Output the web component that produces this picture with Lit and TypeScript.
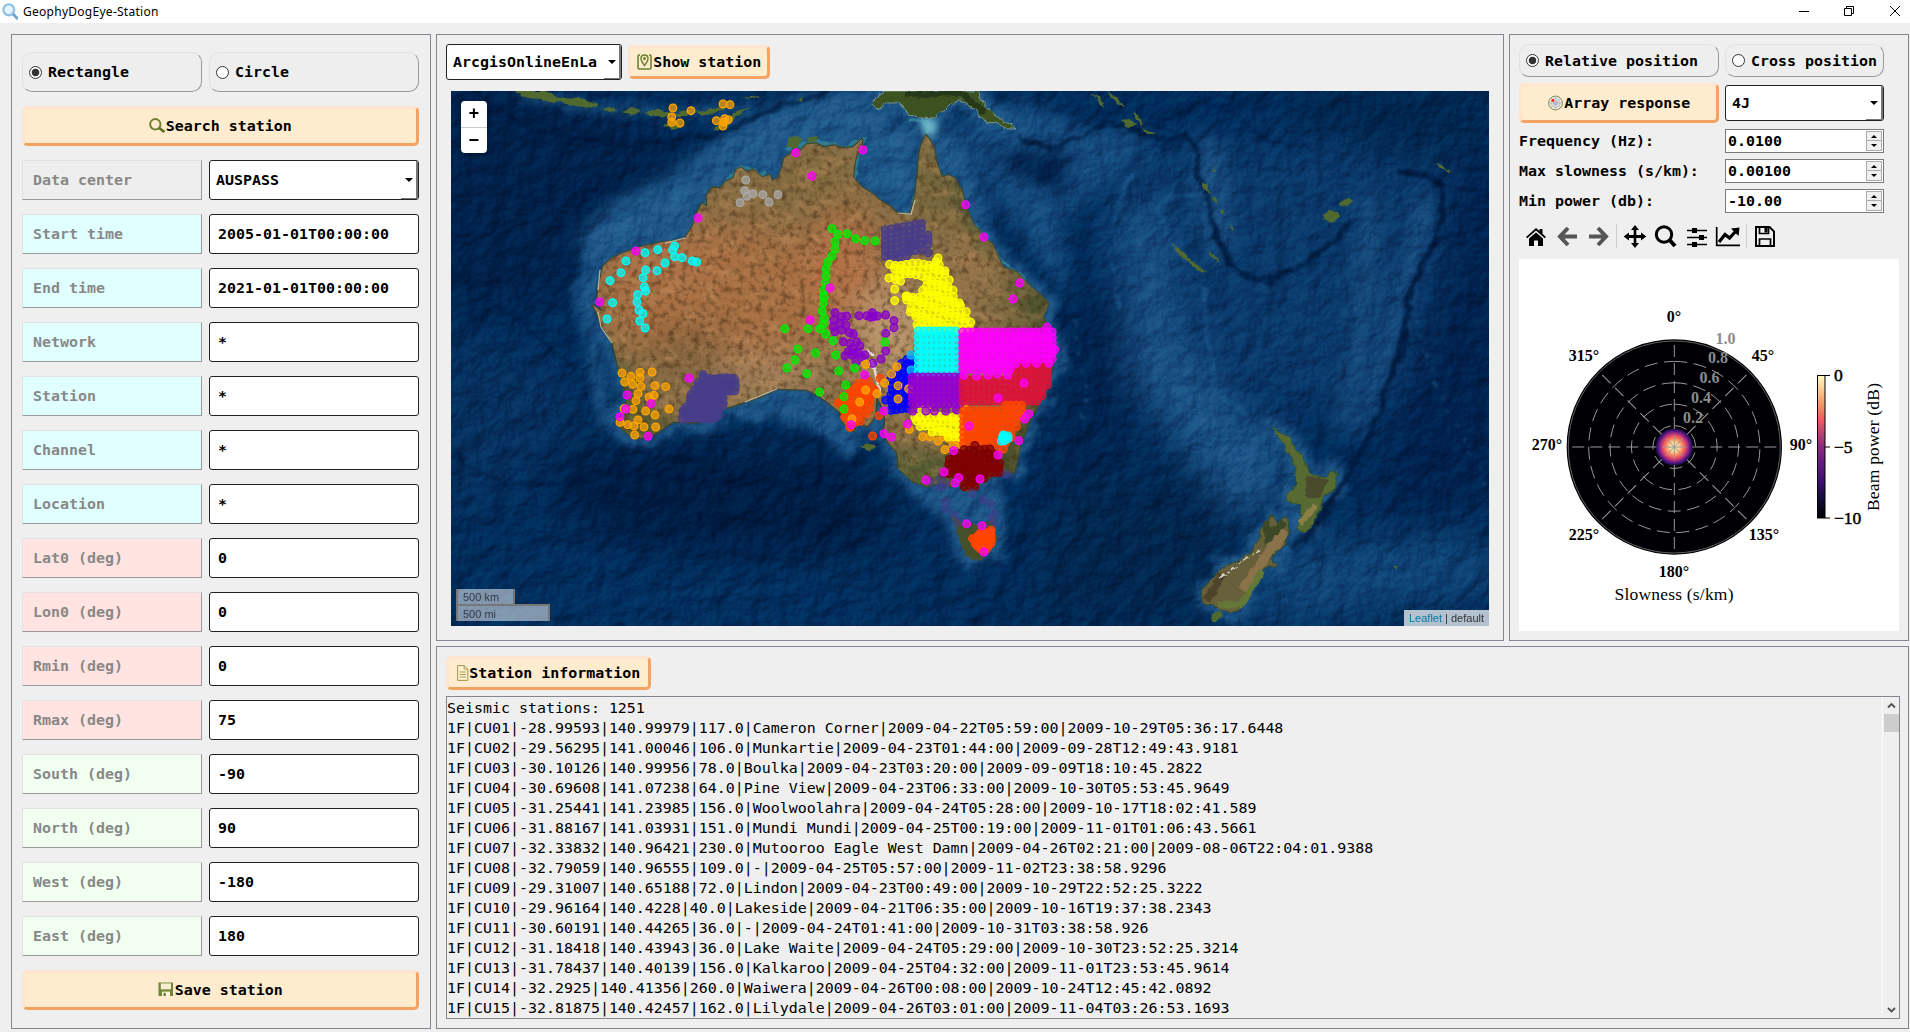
import { LitElement, html, css, svg } from "lit";
import { customElement } from "lit/decorators.js";

/* ---------- station markers ---------- */
type P = [number, number];
const parse = (s: string): P[] => s.trim().split(/\s+/).map((p) => p.split(",").map(Number) as P);

const inside = (x: number, y: number, poly: P[]) => {
  let hit = false;
  for (let i = 0, j = poly.length - 1; i < poly.length; j = i++) {
    const [xi, yi] = poly[i];
    const [xj, yj] = poly[j];
    if (yi > y !== yj > y && x < ((xj - xi) * (y - yi)) / (yj - yi) + xi) hit = !hit;
  }
  return hit;
};

/* regular array of stations limited to an outline; "jitter" loosens the grid */
const fill = (outline: string, dx: number, dy: number, jitter = 0): P[] => {
  const poly = parse(outline);
  const xs = poly.map((p) => p[0]);
  const ys = poly.map((p) => p[1]);
  const out: P[] = [];
  let n = 0;
  for (let y = Math.min(...ys) + 1; y <= Math.max(...ys); y += dy)
    for (let x = Math.min(...xs) + 1; x <= Math.max(...xs); x += dx) {
      n++;
      if (inside(x, y, poly)) out.push([x + Math.sin(n * 12.9) * jitter, y + Math.cos(n * 7.3) * jitter]);
    }
  return out;
};

/* slanted lattice spanned by two step vectors */
const lattice = (x0: number, y0: number, ax: number, ay: number, na: number, bx: number, by: number, nb: number): P[] => {
  const out: P[] = [];
  for (let i = 0; i < na; i++) for (let j = 0; j < nb; j++) out.push([x0 + i * ax + j * bx, y0 + i * ay + j * by]);
  return out;
};

interface Net { color: string; pts: P[]; soft?: boolean }
const NETS: Net[] = [
  { color: "#ffa500", pts: parse("339,-336 393,-328 335,-309 335,-293 360,-291 489,-348 510,-346 469,-298 494,-304 505,-301 489,-282 492,-294") },
  { color: "#a9a9a9", pts: parse("557,-120 554,-88 579,-79 560,-71 609,-76 654,-76 627,-54 540,-52") },
  { color: "#00ffff", pts: parse("198,123 183,158 150,182 255,98 293,89 338,90 344,78 344,110 366,113 397,123 410,126 315,129 291,152 257,150 249,173 253,201 257,213 233,224 231,246 237,270 249,281 239,303 255,324 158,248 141,297") },
  { color: "#ffa500", pts: parse("186,459 213,469 240,457 276,456 194,486 218,493 240,474 243,500 285,497 317,500 234,521 267,531 282,526 228,542 192,566 219,568 257,573 285,585 327,567 234,600 180,607 203,614 222,618 252,621 287,621 224,645") },
  { color: "#483d8b", pts: fill("418,462 535,468 532,512 500,520 490,560 470,604 355,604 362,570 385,550 385,518 412,505", 12, 12, 2) },
  { color: "#483d8b", pts: [...lattice(976, 30, 18, -3.3, 7, 0, 15.6, 6), ...parse("1104,46 1104,72 1104,58 1104,98 1046,70 1054,64 1062,76 1050,84 993,118 1018,112 1040,107")] },
  { color: "#ffff00", pts: [...fill("990,128 1135,116 1245,328 1068,328 1034,228 1085,208 1092,190 1085,172 1000,186", 16, 16, 4), ...parse("987,174 1004,207 1004,242 1040,240 1038,228 1128,125")] },
  { color: "#8800cc", pts: parse("825,278 822,300 845,290 860,288 820,320 840,310 858,315 825,335 845,330 868,338 880,342 897,287 920,287 937,278 940,290 932,292 952,288 977,285 1002,302 1002,323 977,340 977,393 963,417 938,430 850,365 870,370 890,365 878,385 900,378 855,407 875,405 895,400 915,405 888,425 865,395 905,410 882,398") },
  { color: "#00ee00", pts: parse("816,26 834,43 861,41 887,56 914,62 945,63 825,65 825,87 816,108 804,126 798,147 798,168 796,190 790,212 792,230 790,248 786,272 793,295 790,312 780,326 744,326 674,326 797,342 819,362 714,387 767,399 828,405 705,420 681,444 740,461 836,453 884,444 975,366 779,516") },
  { color: "#ff4500", pts: [...fill("838,548 880,490 925,472 940,480 944,540 905,605 872,630 848,590", 15, 15, 4), ...parse("957,587 938,648 960,475 944,510 870,622 834,549")] },
  { color: "#00ee00", pts: parse("857,495 852,530 852,567") },
  { color: "#0000ff", pts: fill("1036,402 1064,420 1064,470 1050,480 1052,574 982,570 978,545 982,465 1018,452", 16, 15, 3) },
  { color: "#ffa500", pts: parse("917,433 1011,440 995,462 974,489 1014,497 1046,506 951,521 917,510 1014,537 899,546 876,597") },
  { color: "#00bfff", pts: parse("1053,405 1053,450") },
  { color: "#ffa500", pts: parse("1048,628 1088,650 1110,650 1134,663 1155,689 1150,650 1165,655 1180,675 1205,675 1200,640 1212,558 1190,660") },
  { color: "#ffff00", pts: fill("1050,602 1080,572 1210,578 1210,662 1180,662 1125,645 1070,622", 16, 16, 3) },
  { color: "#00ffff", pts: fill("1074,332 1200,332 1200,460 1074,460", 15.8, 17.5) },
  { color: "#9400d3", pts: [...fill("1056,470 1200,470 1200,560 1056,560", 15.8, 16), ...parse("1058,573 1098,573 1123,573 1157,573 1190,570")] },
  { color: "#dc143c", pts: fill("1370,430 1476,430 1462,505 1435,555 1208,555 1208,470 1348,470", 15.8, 16) },
  { color: "#ff4500", pts: [...fill("1210,558 1398,555 1372,625 1350,675 1210,675", 15.8, 16), ...parse("1281,689 1310,689 1330,687")] },
  { color: "#ff00ff", pts: [...fill("1207,335 1478,335 1480,430 1370,432 1352,456 1207,458", 15.8, 16), ...parse("1484,388 1461,322 1467,430 1430,430 1398,430 1343,465 1312,462 1285,465 1250,468 1212,466")] },
  { color: "#800000", pts: fill("1158,715 1208,688 1240,674 1290,684 1330,735 1330,766 1255,776 1258,805 1215,806 1200,775 1152,765", 15, 14, 2) },
  { color: "#483d8b", soft: true, pts: parse("1142,775 1138,802 1155,790 1148,798 1156,845 1157,865 1182,885 1195,907 1237,820 1269,840 1293,852 1303,882 1300,906 1296,893 1340,762 1110,785") },
  { color: "#00ffff", pts: parse("1324,663 1328,655 1330,645 1336,655 1344,648 1344,656 1334,662 1328,650") },
  { color: "#ff4500", pts: fill("1236,955 1262,936 1295,930 1298,965 1280,990 1262,992 1246,978", 8, 8, 1) },
  { color: "#ff00ff", pts: parse("708,-202 909,-210 756,-132 414,-6 1217,-46 228,93 119,246 810,204 750,300 1272,51 1380,189 1359,237 387,474 201,525 273,551 197,567 180,590 264,649 914,465 972,573 873,614 972,641 995,651 1043,612 1181,692 1152,756 1098,780 1196,773 1185,789 1260,777 1314,705 1376,662 1406,582 1394,597 1392,489 1314,534 1227,618 1220,911 1266,917 1272,996") },
];

/* ---------- coast outlines ---------- */
const AUS =
  "M598,287L602,270L603,266L612,258L623,253L640,247L662,242L674,241L685,238L692,227L698,210L702,203L707,206L706,196L712,187L720,188L726,181L733,178L736,170L741,167L747,172L753,169L762,177L770,175L772,181L778,178L782,167L784,158L791,153L794,147L801,150L806,144L816,143L824,147L834,145L844,148L853,147L862,138L863,149L857,155L855,163L853,177L862,187L872,193L880,200L890,206L898,213L910,214L914,200L917,177L919,153L922,142L926,134L934,147L937,163L942,177L949,175L955,178L962,190L966,207L973,223L987,240L992,243L1003,267L1017,272L1031,287L1042,296L1049,303L1043,317L1050,330L1055,350L1052,370L1043,397L1030,420L1020,447L1015,473L1006,472L997,475L985,480L977,487L968,492L961,484L957,483L950,487L943,482L927,487L920,484L913,482L898,468L897,453L888,443L883,433L885,420L882,408L877,397L876,412L873,420L867,427L862,424L868,407L873,396L875,388L866,403L858,423L853,432L843,423L840,413L833,407L820,397L807,390L777,389L760,397L737,405L720,410L713,420L693,423L673,422L657,433L647,438L633,438L620,428L618,420L625,410L627,397L622,380L617,363L612,343L602,327L596,312L592,304L601,311L600,303L597,298Z";
const TAS = "M953,516L963,522L978,524L993,519L997,537L994,547L991,546L988,556L980,560L970,561L965,553L962,547L957,532Z";
const NEWGUINEA = "M873,106L875,97L884,91L976,91L981,98L985,107L995,115L1003,120L1017,129L1008,129L996,123L986,122L976,110L966,103L959,100L950,104L944,110L934,118L920,117L909,115L904,107L898,103L888,103L880,108Z";
const NZN = "M1272,427L1280,433L1290,437L1295,451L1302,454L1304,459L1307,463L1308,471L1312,474L1325,478L1330,472L1339,472L1336,482L1335,490L1323,495L1322,505L1318,513L1312,524L1305,532L1296,528L1302,515L1300,505L1291,502L1285,497L1286,493L1295,488L1296,472L1293,460L1287,450L1282,443Z";
const NZS = "M1268,517L1273,515L1277,523L1283,518L1287,517L1290,528L1290,533L1283,546L1275,553L1272,561L1278,563L1276,567L1268,567L1256,575L1250,590L1247,600L1238,611L1230,612L1218,609L1214,605L1202,603L1203,590L1212,578L1223,568L1240,560L1253,550L1258,540L1260,530Z";
const ISLES =
  "M515,91L545,91L560,97L580,98L598,104L597,108L583,107L560,103L540,99L528,98Z M602,109L610,107L618,110L610,113Z M622,111L632,107L640,111L632,115Z M643,111L656,109L672,113L690,110L686,116L668,116L650,116Z M696,111L712,109L728,106L722,110L704,115Z M662,125L674,122L682,126L672,129Z M714,128L724,120L738,111L750,107L741,114L730,122L719,131Z M740,98L760,96L755,99Z M799,100L804,95L801,103Z M1092,93L1100,97L1106,106L1100,104Z M1107,91L1118,98L1124,108L1112,98Z M1120,120L1131,119L1136,125L1128,128Z M1132,110L1139,117L1143,128L1137,121Z M1143,127L1152,132L1155,136L1147,133Z M1173,244L1180,249L1190,260L1206,271L1199,270L1186,261L1176,251Z M1202,182L1207,184L1210,193L1204,189Z M1212,196L1218,200L1217,204L1213,201Z M1214,167L1216,173L1213,173Z M1223,209L1227,214L1223,213Z M1229,225L1234,229L1230,230Z M1207,250L1215,255L1221,263L1212,257Z M1323,215L1328,211L1337,212L1340,217L1333,222L1325,220Z M1338,203L1346,198L1355,200L1348,205L1340,206Z M1437,164L1443,165L1445,170L1440,168Z M1446,168L1453,173L1447,171Z M1213,613L1219,611L1222,616L1217,621L1212,621Z M787,138L797,136L802,141L797,147L787,146Z M806,137L815,135L818,140L809,142Z M861,448L868,443L877,446L870,451Z M1393,566L1397,565L1397,570Z";

/* ---------- glyphs ---------- */
const icon = {
  logo: svg`<circle cx="6.8" cy="6.8" r="5.4" fill="#e9f4fc" stroke="#91c1e5" stroke-width="2.4"/><path d="M11,11L16,16" stroke="#6ea6d2" stroke-width="3"/>`,
  search: svg`<circle cx="6.3" cy="6.3" r="5.2" fill="none" stroke="#718335" stroke-width="2"/><path d="M10,10L15.4,14" stroke="#5c7025" stroke-width="2.6"/>`,
  save: svg`<path d="M0.5,0.5H15V14H0.5Z" fill="#6f8636"/><path d="M2.8,1.4H13V7.4H2.8Z" fill="#f9edd2"/><path d="M4,9.6H12V14H4Z" fill="#fff3d8"/><path d="M5.6,10.8H7.7V14H5.6Z" fill="#5b7326"/>`,
  pin: svg`<path d="M3,1H2.2Q1,1 1,2.2V13.8Q1,15 2.2,15H12.8Q14,15 14,13.8V2.2Q14,1 12.8,1H12" fill="none" stroke="#66802f" stroke-width="1.5"/><path d="M7.5,1Q11,1 11,4.5Q11,7 7.5,11.5Q4,7 4,4.5Q4,1 7.5,1Z" fill="#fbe8c4" stroke="#66802f" stroke-width="1.4"/><circle cx="7.5" cy="4.6" r="1.5" fill="#66802f"/>`,
  doc: svg`<path d="M.6,.6H7.2L10.8,4.2V15.4H.6Z" fill="#fff0cf" stroke="#9c9a50"/><path d="M7.2,.6V4.2H10.8M2.5,7H9M2.5,9.5H9M2.5,12H9" fill="none" stroke="#a3a05a"/>`,
  radar: svg`<circle cx="7.5" cy="8" r="6.9" fill="#f4ecd6" stroke="#779054" stroke-width="1"/><circle cx="7.5" cy="8" r="4.4" fill="none" stroke="#a9aecb" stroke-width=".8"/><circle cx="7.5" cy="8" r="2" fill="none" stroke="#9097c0" stroke-width=".8"/><path d="M7.5,1V15M.6,8H14.4M2.8,3.4L12.2,12.6M12.2,3.4L2.8,12.6" stroke="#a4a9c8" stroke-width=".6"/><circle cx="4.8" cy="5.4" r="1.4" fill="#ed1c1c"/>`,
};
const glyph = (g: unknown, w = 16, h = 16) => html`<svg class="ico" width=${w} height=${h} viewBox="0 0 ${w} ${h}">${g}</svg>`;

const FIELDS: [string, string, string][] = [
  ["Start time", "2005-01-01T00:00:00", "cyan"],
  ["End time", "2021-01-01T00:00:00", "cyan"],
  ["Network", "*", "cyan"],
  ["Station", "*", "cyan"],
  ["Channel", "*", "cyan"],
  ["Location", "*", "cyan"],
  ["Lat0 (deg)", "0", "rose"],
  ["Lon0 (deg)", "0", "rose"],
  ["Rmin (deg)", "0", "rose"],
  ["Rmax (deg)", "75", "rose"],
  ["South (deg)", "-90", "mint"],
  ["North (deg)", "90", "mint"],
  ["West (deg)", "-180", "mint"],
  ["East (deg)", "180", "mint"],
];

const LOG = `Seismic stations: 1251
1F|CU01|-28.99593|140.99979|117.0|Cameron Corner|2009-04-22T05:59:00|2009-10-29T05:36:17.6448
1F|CU02|-29.56295|141.00046|106.0|Munkartie|2009-04-23T01:44:00|2009-09-28T12:49:43.9181
1F|CU03|-30.10126|140.99956|78.0|Boulka|2009-04-23T03:20:00|2009-09-09T18:10:45.2822
1F|CU04|-30.69608|141.07238|64.0|Pine View|2009-04-23T06:33:00|2009-10-30T05:53:45.9649
1F|CU05|-31.25441|141.23985|156.0|Woolwoolahra|2009-04-24T05:28:00|2009-10-17T18:02:41.589
1F|CU06|-31.88167|141.03931|151.0|Mundi Mundi|2009-04-25T00:19:00|2009-11-01T01:06:43.5661
1F|CU07|-32.33832|140.96421|230.0|Mutooroo Eagle West Damn|2009-04-26T02:21:00|2009-08-06T22:04:01.9388
1F|CU08|-32.79059|140.96555|109.0|-|2009-04-25T05:57:00|2009-11-02T23:38:58.9296
1F|CU09|-29.31007|140.65188|72.0|Lindon|2009-04-23T00:49:00|2009-10-29T22:52:25.3222
1F|CU10|-29.96164|140.4228|40.0|Lakeside|2009-04-21T06:35:00|2009-10-16T19:37:38.2343
1F|CU11|-30.60191|140.44265|36.0|-|2009-04-24T01:41:00|2009-10-31T03:38:58.926
1F|CU12|-31.18418|140.43943|36.0|Lake Waite|2009-04-24T05:29:00|2009-10-30T23:52:25.3214
1F|CU13|-31.78437|140.40139|156.0|Kalkaroo|2009-04-25T04:32:00|2009-11-01T23:53:45.9614
1F|CU14|-32.2925|140.41356|260.0|Waiwera|2009-04-26T00:08:00|2009-10-24T12:45:42.0892
1F|CU15|-32.81875|140.42457|162.0|Lilydale|2009-04-26T03:01:00|2009-11-04T03:26:53.1693`;

@customElement("station-map")
class StationMap extends LitElement {
  static styles = css`
    :host { display: block; position: relative; overflow: hidden; background: #022b5a; font-family: "Liberation Sans", Arial, sans-serif; font-weight: normal; }
    filter { color-interpolation-filters: sRGB; }
    .base { display: block; width: 1038px; height: 535px; }
    .relief { mix-blend-mode: soft-light; }
    .zoom { position: absolute; left: 10px; top: 10px; width: 26px; height: 52px; background: #fff; border-radius: 4px; font: bold 18px/26px "Liberation Mono", monospace; text-align: center; color: #000; box-shadow: 0 1px 5px rgba(0, 0, 0, 0.5); }
    .zoom div { height: 26px; box-sizing: border-box; }
    .zoom div + div { border-top: 1px solid #ccc; }
    .scale { position: absolute; left: 5px; bottom: 5px; font-size: 11px; color: #333b44; }
    .scale div { box-sizing: border-box; border: 2px solid #777; border-bottom: 0; background: rgba(255, 255, 255, 0.5); padding-left: 5px; line-height: 16px; }
    .scale .km { width: 59px; height: 15px; border-top: 0; }
    .scale .mi { width: 94px; height: 17px; }
    .attr { position: absolute; right: 0; bottom: 0; height: 16px; padding: 0 5px; font-size: 11px; line-height: 16px; background: rgba(255, 255, 255, 0.7); color: #333; }
    .attr span { color: #0078a8; }
  `;
  render() {
    return html`
      <svg class="base" viewBox="451 91 1038 535">
        <defs>
          <filter id="b3" x="-30%" y="-30%" width="160%" height="160%"><feGaussianBlur stdDeviation="3.5"/></filter>
          <filter id="b1" x="-30%" y="-30%" width="160%" height="160%"><feGaussianBlur stdDeviation="1.3"/></filter>
          <filter id="b9" x="-50%" y="-50%" width="200%" height="200%"><feGaussianBlur stdDeviation="9"/></filter>
          <filter id="b18" x="-50%" y="-50%" width="200%" height="200%"><feGaussianBlur stdDeviation="18"/></filter>
          <filter id="shelf" x="-10%" y="-10%" width="120%" height="120%"><feGaussianBlur stdDeviation="4" result="g"/><feTurbulence type="fractalNoise" baseFrequency="0.04" numOctaves="4" seed="6" result="t"/><feDisplacementMap in="g" in2="t" scale="18"/></filter>
          <filter id="rough" x="-5%" y="-5%" width="110%" height="110%"><feTurbulence type="fractalNoise" baseFrequency="0.12" numOctaves="3" seed="4" result="t"/><feDisplacementMap in="SourceGraphic" in2="t" scale="6" xChannelSelector="R" yChannelSelector="G"/></filter>
          <filter id="warp" x="-10%" y="-10%" width="120%" height="120%"><feTurbulence type="fractalNoise" baseFrequency="0.05" numOctaves="3" seed="9" result="t"/><feDisplacementMap in="SourceGraphic" in2="t" scale="12" xChannelSelector="R" yChannelSelector="G"/><feGaussianBlur stdDeviation="1.6"/></filter>
          <filter id="relief" x="0" y="0" width="100%" height="100%">
            <feTurbulence type="fractalNoise" baseFrequency="0.05" numOctaves="6" seed="11"/>
            <feColorMatrix values="0 0 0 0 0  0 0 0 0 0  0 0 0 0 0  1 0 0 0 0"/>
            <feDiffuseLighting surfaceScale="5" lighting-color="#a4a4a4"><feDistantLight azimuth="225" elevation="50"/></feDiffuseLighting>
          </filter>
          <filter id="grain" x="0" y="0" width="100%" height="100%">
            <feTurbulence type="fractalNoise" baseFrequency="0.16" numOctaves="4" seed="3"/>
            <feColorMatrix values="0 0 0 0 .22  0 0 0 0 .15  0 0 0 0 .06  2.4 0 0 0 -1.1"/>
          </filter>
          <filter id="sand" x="0" y="0" width="100%" height="100%">
            <feTurbulence type="fractalNoise" baseFrequency="0.05 0.09" numOctaves="5" seed="21"/>
            <feColorMatrix values="0 0 0 0 .8  0 0 0 0 .6  0 0 0 0 .4  0 2.4 0 0 -1.1"/>
          </filter>
          <clipPath id="land"><path d=${AUS}/></clipPath>
        </defs>
        <rect x="451" y="91" width="1038" height="535" fill="#022c5b"/>
        <g filter="url(#b18)">
          <path d="M440,80H560L700,160L600,230L560,300L470,320H440Z" fill="#01214b"/>
          <path d="M440,330L560,360L580,420L500,500L440,520Z" fill="#06305f"/>
          <path d="M560,455L680,440L840,455L900,510L860,560L640,550L560,510Z" fill="#001d45"/>
          <path d="M1060,290L1120,300L1140,420L1100,470L1060,520L1040,470L1070,400Z" fill="#01234f"/>
          <path d="M1110,140H1480V330L1380,420L1200,380L1100,250Z" fill="#0a396b"/>
          <path d="M1450,160H1500V500L1380,520L1400,400L1440,280Z" fill="#01224f"/>
          <path d="M1290,91H1489V150L1400,160L1290,120Z" fill="#01264f"/>
          <path d="M1060,480L1180,470L1240,500L1190,620H1040Z" fill="#02264f"/>
          <path d="M1120,200L1165,220L1175,330L1230,400L1290,440L1280,500L1240,520L1200,470L1130,380Z" fill="#1b5488"/>
          <path d="M1290,540L1480,538L1500,590L1300,620H1220L1270,580Z" fill="#104679"/>
          <path d="M440,560H900V640H440Z" fill="#022f5f"/>
        </g>
        <g filter="url(#b9)">
          <path d="M1020,100L1090,130L1150,130L1120,170L1060,220L1070,300L1040,260L980,170L960,120Z" fill="#154c80"/>
          <path d="M976,152L1070,150L1065,200L1000,165Z" fill="#01224d"/>
          <path d="M577,240L610,205L680,170L740,120L800,95L870,85L900,125L960,130L990,220L960,260L700,270L600,290Z" fill="#1f5a8c"/>
          <path d="M1195,130L1225,150L1235,240L1215,270L1195,200Z" fill="#184d7f"/>
          <path d="M1358,190L1380,200L1378,300L1350,420L1330,440L1350,340Z" fill="#164a7c"/>
          <path d="M1420,190L1436,200L1420,270L1400,330L1370,420L1350,450L1380,340L1400,280Z" fill="#1a5083"/>
        </g>
        <g fill="none" stroke="#1c5587" stroke-linejoin="round" filter="url(#shelf)">
          <path d=${AUS} stroke-width="17"/>
          <path d=${TAS} stroke-width="17" fill="#1c5587"/>
          <path d="M910,485L1000,480L1000,525L950,520Z" fill="#1c5587" stroke-width="10"/>
          <path d="M715,412Q800,385 860,450" stroke-width="28"/>
          <path d="M600,255L580,300L600,380L605,430" stroke-width="16" opacity=".7"/>
          <path d=${NZN + NZS} stroke-width="14"/>
          <path d=${NEWGUINEA} stroke-width="16"/>
          <path d="M520,95L600,108L700,112L750,105" stroke-width="12" opacity=".6"/>
        </g>
        <g fill="none" filter="url(#warp)">
          <path d="M470,80C500,125 540,135 600,142C680,146 740,130 760,112C790,98 810,108 830,86" stroke="#001a40" stroke-width="6" opacity=".7"/>
          <path d="M1017,137L1050,148L1075,140L1105,122L1130,127L1155,139L1190,135L1197,155L1199,177L1210,207L1216,237L1228,260L1245,278L1270,280L1303,267L1335,240L1352,220" stroke="#001c42" stroke-width="5" opacity=".85"/>
          <path d="M1150,127L1175,115L1200,103L1230,110L1260,135L1290,145" stroke="#011e48" stroke-width="3.5" opacity=".7"/>
          <path d="M1399,170L1431,177L1444,187L1442,220L1423,260L1408,303L1403,340L1379,413L1360,453L1340,487L1310,533L1290,548" stroke="#00173d" stroke-width="6" opacity=".85"/>
          <path d="M1160,150L1128,180L1113,220L1112,260L1120,310" stroke="#1d588c" stroke-width="3.5" opacity=".6"/>
          <path d="M1205,195Q1160,190 1160,215Q1170,240 1185,262M1205,285L1208,340L1215,390L1250,420" stroke="#1c568a" stroke-width="5" opacity=".55"/>
          <path d="M451,270Q490,300 520,320Q550,350 575,370" stroke="#001c43" stroke-width="2.5" opacity=".8"/>
          <path d="M451,450Q500,500 570,480Q650,470 750,485" stroke="#00183e" stroke-width="3" opacity=".6"/>
          <path d="M1056,480Q1020,510 1015,560Q1000,600 970,626" stroke="#001b44" stroke-width="6" opacity=".5"/>
          <path d="M1075,320L1085,390L1080,440M1415,320L1435,380L1460,430L1489,490" stroke="#2a5b86" stroke-width="2" stroke-dasharray="4 12" opacity=".7"/>
        </g>
        <rect class="relief" x="451" y="91" width="1038" height="535" filter="url(#relief)" opacity=".6"/>
        <g fill="none" stroke="#3d9a9c" filter="url(#rough)" opacity=".6">
          <path d="M694,223L707,200L722,187L741,167L765,176M787,150L816,142L845,148L862,140L855,165L855,180" stroke-width="5"/>
          <path d="M898,214L912,215L917,190M910,120L926,122L927,135" stroke-width="4"/>
          <path d="M973,223L1003,262L1026,280" stroke-width="3"/>
        </g>
        <path d="M920,118h14l4,12l-10,8l-6,-8Z" fill="#6fb6cb" filter="url(#b3)"/>
        <g stroke="#2a3d28" stroke-width="1">
          <path d=${AUS} fill="#7c6742" filter="url(#b1)"/>
          <path d=${AUS} fill="#8a7048"/>
        </g>
        <g clip-path="url(#land)">
          <g filter="url(#b18)">
            <ellipse cx="720" cy="295" rx="125" ry="72" fill="#a87044"/>
            <ellipse cx="660" cy="265" rx="60" ry="28" fill="#ad7348"/>
            <ellipse cx="845" cy="265" rx="35" ry="60" fill="#b37046"/>
            <ellipse cx="890" cy="330" rx="38" ry="50" fill="#bb9870"/>
            <ellipse cx="800" cy="185" rx="80" ry="32" fill="#866d42"/>
            <ellipse cx="760" cy="372" rx="70" ry="18" fill="#a88560"/>
            <ellipse cx="690" cy="352" rx="36" ry="20" fill="#7a5c39"/>
            <ellipse cx="932" cy="180" rx="18" ry="60" fill="#70663c"/>
            <ellipse cx="1020" cy="300" rx="42" ry="42" fill="#73663f"/>
            <ellipse cx="975" cy="265" rx="25" ry="50" fill="#99774c"/>
          </g>
          <g filter="url(#b9)">
            <path d="M1010,270L1060,300L1065,380L1010,490L970,500L980,470L1025,410L1040,340Z" fill="#464f2a"/>
            <path d="M610,360L630,370L650,410L680,425L640,450L600,430Z" fill="#535931"/>
            <path d="M885,450L960,455L1000,490L900,495Z" fill="#525c33"/>
            <path d="M945,165L970,190L1000,250L985,250L955,210Z" fill="#4e5631"/>
          </g>
          <rect x="590" y="130" width="470" height="370" filter="url(#sand)" opacity=".42"/>
          <rect x="590" y="130" width="470" height="370" filter="url(#grain)" opacity=".55"/>
          <path d="M872,360L876,376L880,395M868,350L873,356" stroke="#e6ddd0" stroke-width="2.5" fill="none" filter="url(#rough)"/>
        </g>
        <path d="M598,312L601,327L612,343M600,270L598,290M685,238L665,243M898,213L911,214L915,200M777,389L745,402M720,408L716,418" stroke="#d8cfb4" stroke-width="1.2" fill="none" opacity=".8"/>
        <g filter="url(#rough)">
          <path d=${NEWGUINEA} fill="#3c5220" stroke="#8fa89a" stroke-width=".8"/>
          <path d="M905,95L960,93L985,112" stroke="#26381a" stroke-width="6" fill="none"/>
          <path d=${ISLES} fill="#50692f"/>
          <path d=${TAS} fill="#454f2b"/>
          <path d=${NZN} fill="#566a31" stroke="#2d5138"/>
          <path d="M1308,476L1330,480L1318,498L1304,496Z" fill="#4a4a2c"/>
          <path d="M1300,524L1316,505" stroke="#8b8048" stroke-width="6"/>
          <path d=${NZS} fill="#665f39" stroke="#2f4a2e"/>
          <path d="M1285,530L1262,562L1242,590" stroke="#8a734a" stroke-width="10" fill="none"/>
          <path d="M1266,520L1268,538L1284,522" stroke="#3c4826" stroke-width="8" fill="none"/>
          <path d="M1207,600L1222,574" stroke="#4c4529" stroke-width="8"/>
          <path d="M1218,605H1240L1248,595L1262,571" stroke="#637737" stroke-width="7" fill="none"/>
          <path d="M1220,578L1236,566L1246,559L1260,550" stroke="#d9d4c8" stroke-width="1.3" stroke-dasharray="6 3 3 3" fill="none"/>
        </g>
        <g transform="translate(560 220) scale(.33333)">
          ${NETS.map((n) => svg`<g fill=${n.color} stroke=${n.color} stroke-width="3.6" fill-opacity=".72" opacity=${n.soft ? 0.7 : 1}>${n.pts.map(([x, y]) => svg`<circle cx=${x.toFixed(1)} cy=${y.toFixed(1)} r="11.6"/>`)}</g>`)}
        </g>
      </svg>
      <div class="zoom"><div>+</div><div>−</div></div>
      <div class="scale"><div class="km">500 km</div><div class="mi">500 mi</div></div>
      <div class="attr"><span>Leaflet</span> | default</div>`;
  }
}

@customElement("beam-plot")
class BeamPlot extends LitElement {
  static styles = css`
    :host { display: block; background: #fff; font-family: "Liberation Serif", "Times New Roman", serif; font-weight: normal; }
    svg { display: block; }
    .ang { font-weight: bold; font-size: 16px; text-anchor: middle; }
    .rad { font-weight: bold; font-size: 16px; text-anchor: middle; fill: #8c8c8c; }
    .ttl { font-size: 17.5px; text-anchor: middle; }
    .cb { font-size: 17.5px; stroke: #000; stroke-width: 0.5px; }
  `;
  render() {
    const cx = 155.3, cy = 188, R = 107;
    const angles: [string, number, number][] = [
      ["0°", 155, 63], ["45°", 244, 102], ["90°", 282, 191], ["135°", 245, 281],
      ["180°", 155, 317.5], ["225°", 65, 281], ["270°", 28, 191], ["315°", 65, 102],
    ];
    const radii: [string, number, number][] = [["1.0", 206.5, 85], ["0.8", 199, 104], ["0.6", 190.5, 124], ["0.4", 182, 144], ["0.2", 174, 164]];
    const heat: [number, string][] = [
      [18.6, "#1d1147"], [17.6, "#3b0f70"], [16.4, "#641a80"], [15, "#8c2981"], [13.8, "#b5367a"], [12.4, "#de4968"],
      [11, "#f1605d"], [9.6, "#fa7f5e"], [8.2, "#fe9f6d"], [6.6, "#fec287"], [5, "#fddc9e"], [3, "#fcf0b2"],
    ];
    return html`<svg width="380" height="372" viewBox="0 0 380 372">
      <defs><linearGradient id="magma" x1="0" y1="1" x2="0" y2="0">
        <stop offset="0" stop-color="#000004"/><stop offset=".13" stop-color="#140e36"/><stop offset=".25" stop-color="#3b0f70"/><stop offset=".38" stop-color="#641a80"/>
        <stop offset=".5" stop-color="#8c2981"/><stop offset=".6" stop-color="#c73e73"/><stop offset=".7" stop-color="#f1605d"/><stop offset=".82" stop-color="#fe9f6d"/><stop offset="1" stop-color="#fcfdbf"/>
      </linearGradient></defs>
      <circle cx=${cx} cy=${cy} r=${R} fill="#000004" stroke="#000" stroke-width="1.3"/>
      ${heat.map(([r, c]) => svg`<circle cx=${cx} cy=${cy} r=${r} fill=${c}/>`)}
      <g fill="none" stroke="#999" stroke-width="1">
        ${[0, 45, 90, 135, 180, 225, 270, 315].map((a) => svg`<path d="M${cx},${cy}V${cy - R}" transform="rotate(${a} ${cx} ${cy})" stroke-dasharray="12 6"/>`)}
        ${[1, 2, 3, 4].map((k) => svg`<circle cx=${cx} cy=${cy} r=${k * 21.4} transform="rotate(-90 ${cx} ${cy})" stroke-dasharray="13 6.5"/>`)}
        <circle cx=${cx} cy=${cy} r=${R - 1} stroke="#777" stroke-width=".8"/>
      </g>
      ${radii.map(([t, x, y]) => svg`<text class="rad" x=${x} y=${y}>${t}</text>`)}
      ${angles.map(([t, x, y]) => svg`<text class="ang" x=${x} y=${y}>${t}</text>`)}
      <text class="ttl" x="155" y="341" textLength="119">Slowness (s/km)</text>
      <rect x="298.5" y="116.5" width="7.5" height="142.5" fill="url(#magma)" stroke="#000"/>
      <path d="M306,116.5h5M306,188h5M306,259h5" stroke="#000"/>
      <text class="cb" x="315" y="122">0</text><text class="cb" x="315" y="193.5">−5</text><text class="cb" x="315" y="265">−10</text>
      <text class="ttl" transform="translate(360 188) rotate(-90)" textLength="128">Beam power (dB)</text>
    </svg>`;
  }
}

@customElement("app-root")
class AppRoot extends LitElement {
  static styles = css`
    :host { display: block; width: 1910px; height: 1032px; overflow: hidden; background: #efefef; color: #000; font: bold 14.95px/20px "DejaVu Sans Mono", monospace; }
    * { box-sizing: border-box; }
    svg { display: block; flex: none; }
    .bar { height: 23px; background: #fff; display: flex; align-items: center; padding: 0 9px 0 2px; font: 12px/22px "Noto Sans", "Open Sans", sans-serif; }
    .bar .name { margin: 0 auto 0 5px; letter-spacing: 0.27px; }
    .bar .ctl { margin-top: -2px; }
    .main { display: grid; grid-template-columns: 420px 1068px 400px; grid-template-rows: 607px 383px; gap: 5px; padding: 11px 1px 3px 11px; }
    .panel { border: 1px solid #828790; min-width: 0; }
    .left { grid-row: 1 / 3; padding: 17px 11px 0 10px; display: flex; flex-direction: column; gap: 14px; }
    .row { display: grid; grid-template-columns: 180px 210px; gap: 7px; height: 40px; }
    .radio { display: flex; align-items: center; gap: 6px; padding-left: 6px; border: 1px solid #e2e2e2; border-right-color: #999; border-bottom-color: #999; border-radius: 10px; background: #eee; white-space: nowrap; }
    .dot { width: 13px; height: 13px; flex: none; border: 1px solid #333; border-radius: 50%; background: #fff; }
    .dot.on { background: radial-gradient(circle, #333 3.4px, #fff 4.2px); }
    .btn { display: flex; align-items: center; justify-content: center; gap: 0.5px; height: 40px; background: #ffebcd; border: 3px solid #ffe4d0; border-right-color: #f4a460; border-bottom-color: #f4a460; border-radius: 5px; white-space: nowrap; }
    .lab { border: 1px solid #e2e2e2; border-right-color: #999; border-bottom-color: #999; color: #888; padding-left: 10px; line-height: 38px; background: #eee; }
    .cyan { background: #e0ffff; }
    .rose { background: #ffe4e1; }
    .mint { background: #f0fff0; }
    .inp { border: 1px solid #222; border-radius: 3px; background: #fff; padding-left: 8px; line-height: 38px; }
    .combo { display: flex; align-items: center; justify-content: space-between; border: 1px solid #222; border-radius: 3px; background: #fff; padding-left: 6px; overflow: hidden; white-space: nowrap; }
    .arr { align-self: stretch; width: 17px; border-right: 2px solid #777; border-bottom: 1px solid #777; display: flex; align-items: center; justify-content: center; }
    .tri { width: 0; height: 0; border: 4px solid transparent; border-top-color: #000; border-bottom: 0; }
    .center { padding: 9px 14px 14px 14px; display: flex; flex-direction: column; }
    .tools { display: flex; align-items: center; gap: 6px; margin-left: -5px; height: 36px; margin-bottom: 11px; }
    .tools .combo { width: 176px; height: 36px; }
    .tools .btn { width: 142px; height: 34px; }
    .right { padding: 9px 9px 9px; display: flex; flex-direction: column; }
    .pair { display: grid; grid-template-columns: 200px 159px; column-gap: 6px; align-items: center; }
    .pair .radio { height: 33px; }
    .pair .combo { height: 36px; }
    .p2 { margin-top: 6px; }
    .spin { height: 24px; border: 1px solid #7a7a7a; background: #fff; display: flex; align-items: center; justify-content: space-between; padding: 0 1px 0 2px; }
    .ud { width: 16px; height: 20px; display: grid; grid-template-rows: 1fr 1fr; }
    .ud i { border: 1px solid #acacac; background: #f0f0f0; display: flex; align-items: center; justify-content: center; }
    .ud i + i { border-top: 0; }
    .ud b { border: 3px solid transparent; border-top: 3px solid #000; border-bottom: 0; }
    .ud i:first-child b { transform: rotate(180deg); }
    .sl { margin-top: 6px; }
    .first { margin-top: 6px; }
    .nav { height: 46px; }
    .info { grid-column: 2 / 4; padding: 9px; }
    .info .btn { width: 205px; height: 34px; }
    .box { margin-top: 6px; height: 323px; width: 1454px; border: 1px solid #828790; display: flex; justify-content: space-between; }
    pre { margin: 0.5px 0 0 0; font: 14.95px/20px "DejaVu Sans Mono", monospace; height: 320px; overflow: hidden; }
    .sb { width: 17px; border-left: 1px solid #fafafa; display: flex; flex-direction: column; align-items: center; }
    .thumb { width: 15px; height: 18px; background: #cdcdcd; }
    .sb svg:last-child { margin-top: auto; }
  `;

  private radio(t: string, on = false) {
    return html`<div class="radio"><span class="dot ${on ? "on" : ""}"></span>${t}</div>`;
  }
  private combo(t: string) {
    return html`<div class="combo"><span>${t}</span><span class="arr"><span class="tri"></span></span></div>`;
  }
  private spin(label: string, v: string, cls = "sl") {
    return html`<div class="pair ${cls}"><span>${label}</span><div class="spin"><span>${v}</span><span class="ud"><i><b></b></i><i><b></b></i></span></div></div>`;
  }

  render() {
    return html`
      <div class="bar">
        ${glyph(icon.logo, 16, 17)}
        <span class="name">GeophyDogEye-Station</span>
        <svg class="ctl" width="102" height="12" viewBox="0 0 102 12" fill="none" stroke="#000">
          <path d="M0,6.5H10M45.5,3.5H52.5V10.5H45.5ZM47.5,3V1.5H54.5V8.5H53M91,1L101,11M101,1L91,11"/>
        </svg>
      </div>
      <div class="main">
        <section class="panel left">
          <div class="row">${this.radio("Rectangle", true)}${this.radio("Circle")}</div>
          <div class="btn">${glyph(icon.search)}Search station</div>
          <div class="row"><div class="lab">Data center</div>${this.combo("AUSPASS")}</div>
          ${FIELDS.map(([l, v, c]) => html`<div class="row"><div class="lab ${c}">${l}</div><div class="inp">${v}</div></div>`)}
          <div class="btn">${glyph(icon.save)}Save station</div>
        </section>
        <section class="panel center">
          <div class="tools">${this.combo("ArcgisOnlineEnLa")}<div class="btn">${glyph(icon.pin)}Show station</div></div>
          <station-map></station-map>
        </section>
        <section class="panel right">
          <div class="pair">${this.radio("Relative position", true)}${this.radio("Cross position")}</div>
          <div class="pair p2"><div class="btn">${glyph(icon.radar)}Array response</div>${this.combo("4J")}</div>
          ${this.spin("Frequency (Hz):", "0.0100", "first")}
          ${this.spin("Max slowness (s/km):", "0.00100")}
          ${this.spin("Min power (db):", "-10.00")}
          <svg class="nav" width="380" height="46" viewBox="0 0 380 46">
            <path d="M7,24L17,15L20.500,18V16H23.500V20.700L27,24L25.800,25.200L17,17.600L8.200,25.200Z"/>
            <path d="M10,25.500L17,19.500L24,25.500V33H19V27.500H15V33H10Z"/>
            <g fill="none" stroke="#555" stroke-width="4"><path d="M49,15L41,23.500L49,32M42,23.500H58"/><path d="M79,15L87,23.500L79,32M86,23.500H70"/></g>
            <path d="M97.500,11V35M227.500,11V35" stroke="#ccc"/>
            <path d="M116,12L120,17H117.300V22H122V19.500L127.300,23.500L122,27.500V25H117.300V30H120L116,35L112,30H114.700V25H110V27.500L104.700,23.500L110,19.500V22H114.700V17H112Z"/>
            <circle cx="145" cy="21.500" r="7.700" fill="none" stroke="#000" stroke-width="3"/><path d="M150.500,27L156,33" stroke="#000" stroke-width="4"/>
            <path d="M168,17.500H188M168,24.500H188M168,31.500H188" stroke="#000" stroke-width="1.600"/><path d="M173,15h5v5h-5ZM180,22h5v5h-5ZM173,29h5v5h-5Z"/>
            <path d="M197.700,14V32.300H221" fill="none" stroke="#000" stroke-width="1.700"/><path d="M200,29L206,21.500L210.500,25L217,18" fill="none" stroke="#000" stroke-width="3.200"/><path d="M212,15.500L220.500,14.500L219.500,23Z"/>
            <path d="M237,14H250.500L255,18.500V33H237Z" fill="none" stroke="#000" stroke-width="2"/><path d="M240.500,14V20.500H249.500V14M240.500,33V26H251.500V33" fill="none" stroke="#000" stroke-width="1.700"/><path d="M245.500,15h3v4.500h-3Z"/>
          </svg>
          <beam-plot></beam-plot>
        </section>
        <section class="panel info">
          <div class="btn">${glyph(icon.doc, 12, 16)}Station information</div>
          <div class="box">
            <pre>${LOG}</pre>
            <div class="sb">
              <svg width="15" height="17" viewBox="0 0 15 17"><path d="M4,10.500L7.500,7L11,10.500" fill="none" stroke="#505050" stroke-width="1.800"/></svg>
              <div class="thumb"></div>
              <svg width="15" height="17" viewBox="0 0 15 17"><path d="M4,7L7.500,10.500L11,7" fill="none" stroke="#505050" stroke-width="1.800"/></svg>
            </div>
          </div>
        </section>
      </div>`;
  }
}
